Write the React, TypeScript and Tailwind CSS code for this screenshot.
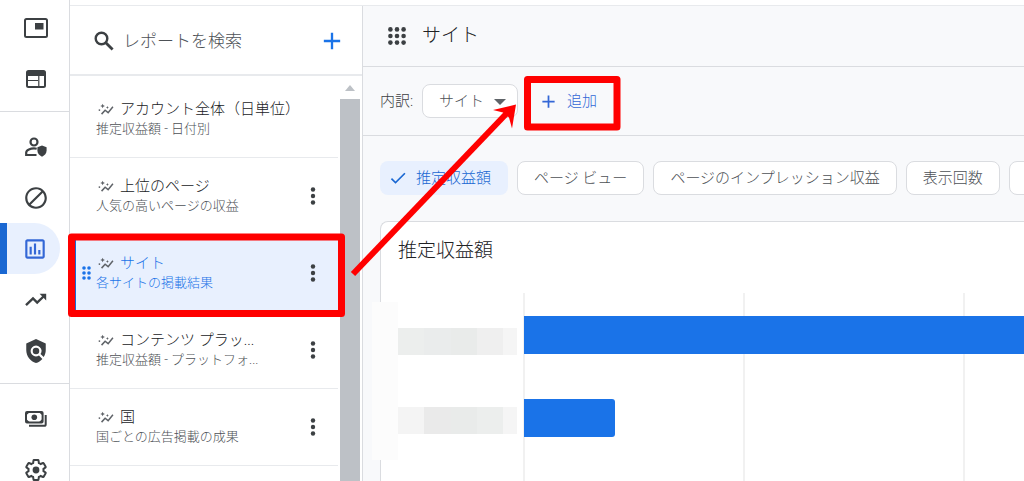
import React, { useState } from 'react';
import { MdAdd, MdBlock, MdCheck, MdOutlineAssessment, MdPolicy } from 'react-icons/md';

interface Report {
  title: string;
  subtitle: string;
  menu: boolean;
}

const reports: Report[] = [
  { title: 'アカウント全体（日単位）', subtitle: '推定収益額 - 日付別', menu: false },
  { title: '上位のページ', subtitle: '人気の高いページの収益', menu: true },
  { title: 'サイト', subtitle: '各サイトの掲載結果', menu: true },
  { title: 'コンテンツ プラッ...', subtitle: '推定収益額 - プラットフォ...', menu: true },
  { title: '国', subtitle: '国ごとの広告掲載の成果', menu: true },
];

const metrics = ['ページ ビュー', 'ページのインプレッション収益', '表示回数'];

function OverviewIcon() {
  return (
    <svg width="24" height="20" viewBox="0 0 24 20" fill="none">
      <rect x="1" y="1" width="22" height="18" rx="1.5" stroke="currentColor" strokeWidth="2" />
      <rect x="11" y="5" width="8.5" height="6.5" fill="currentColor" />
    </svg>
  );
}

function AdsIcon() {
  return (
    <svg width="20" height="18" viewBox="0 0 20 18" fill="none" stroke="currentColor">
      <rect x="1" y="1" width="18" height="16" rx="1.5" strokeWidth="2" />
      <path d="M1 4h18" strokeWidth="4" />
      <path d="M2 10.5h10M12.8 5v11" strokeWidth="1.2" />
    </svg>
  );
}

function PrivacyIcon() {
  return (
    <svg width="22" height="20" viewBox="0 0 22 20" fill="none">
      <circle cx="9" cy="5" r="3.5" stroke="currentColor" strokeWidth="2.2" />
      <path
        d="M11.5 18H1.2v-2.4c0-2.9 4.6-4.2 7.8-4.2 1 0 1.8.1 2.7.3"
        stroke="currentColor"
        strokeWidth="2.2"
      />
      <path d="M17 8.4l4.6 1.9v3.3c0 2.8-1.9 5.1-4.6 6.1-2.7-1-4.6-3.3-4.6-6.1v-3.3z" fill="currentColor" />
    </svg>
  );
}

function TrendIcon() {
  return (
    <svg width="22" height="14" viewBox="0 0 22 14" fill="none">
      <path d="M1 12.2l7-6.8 4.2 4.2L19 3" stroke="currentColor" strokeWidth="2.4" />
      <path d="M14.6.8h6.6v6.6z" fill="currentColor" />
    </svg>
  );
}

function PaymentsIcon() {
  return (
    <svg width="22" height="16" viewBox="0 0 22 16" fill="none">
      <path d="M20.7 4v9.2c0 .9-.6 1.6-1.5 1.6H4" stroke="currentColor" strokeWidth="2" />
      <rect x="1" y="1" width="16.6" height="10.4" rx="1" stroke="currentColor" strokeWidth="2" />
      <path d="M1 1h4L1 4.6zM17.6 1h-4l4 3.6zM1 11.4h4L1 7.8zM17.6 11.4h-4l4-3.6z" fill="currentColor" />
      <circle cx="9.3" cy="6.2" r="2.8" fill="currentColor" />
    </svg>
  );
}

function SettingsIcon() {
  return (
    <svg width="24" height="24" viewBox="0 0 24 24" fill="none">
      <path
        d="M19.43 12.98c.04-.32.07-.64.07-.98s-.03-.66-.07-.98l2.11-1.65c.19-.15.24-.42.12-.64l-2-3.46c-.12-.22-.39-.3-.61-.22l-2.49 1c-.52-.4-1.08-.73-1.69-.98l-.38-2.65C14.46 2.18 14.25 2 14 2h-4c-.25 0-.46.18-.49.42l-.38 2.65c-.61.25-1.17.59-1.69.98l-2.49-1c-.23-.09-.49 0-.61.22l-2 3.46c-.13.22-.07.49.12.64l2.11 1.65c-.04.32-.07.65-.07.98s.03.66.07.98l-2.11 1.65c-.19.15-.24.42-.12.64l2 3.46c.12.22.39.3.61.22l2.49-1c.52.4 1.08.73 1.69.98l.38 2.65c.03.24.24.42.49.42h4c.25 0 .46-.18.49-.42l.38-2.65c.61-.25 1.17-.59 1.69-.98l2.49 1c.23.09.49 0 .61-.22l2-3.46c.12-.22.07-.49-.12-.64z"
        stroke="currentColor"
        strokeWidth="2"
      />
      <circle cx="12" cy="12" r="3.4" fill="currentColor" />
    </svg>
  );
}

function SearchIcon() {
  return (
    <svg width="20" height="20" viewBox="0 0 20 20" fill="none" stroke="#3c4043" className="shrink-0">
      <circle cx="7.5" cy="7.5" r="5.8" strokeWidth="2.4" />
      <path d="M11.8 11.8l6.8 6.8" strokeWidth="2.8" />
    </svg>
  );
}

function InsightIcon() {
  return (
    <svg width="16" height="13" viewBox="0 0 18 14" fill="none" className="shrink-0">
      <path d="M4 12.2l4-4.4 3.4 2.7L16.8 4" stroke="#5f6368" strokeWidth="1.7" />
      <path d="M5.2.4l.8 1.8 1.8.8-1.8.8-.8 1.8-.8-1.8L2.6 3l1.8-.8z" fill="#5f6368" />
      <path d="M10.6 3.2l.5 1.1 1.1.5-1.1.5-.5 1.1-.5-1.1-1.1-.5 1.1-.5z" fill="#5f6368" />
      <circle cx="1.6" cy="7.6" r="1" fill="#5f6368" />
    </svg>
  );
}

function DragDots() {
  return (
    <svg width="9" height="14" viewBox="0 0 9 14" fill="#1a73e8">
      {[2, 7, 12].map((y) => (
        <React.Fragment key={y}>
          <circle cx="2" cy={y} r="1.8" />
          <circle cx="7" cy={y} r="1.8" />
        </React.Fragment>
      ))}
    </svg>
  );
}

function MoreIcon() {
  return (
    <svg width="6" height="18" viewBox="0 0 6 18" fill="#3c4043">
      <circle cx="3" cy="2.5" r="2.2" />
      <circle cx="3" cy="9" r="2.2" />
      <circle cx="3" cy="15.5" r="2.2" />
    </svg>
  );
}

function GridDots() {
  return (
    <svg width="18" height="18" viewBox="0 0 18 18" fill="#3c4043">
      {[2.4, 9, 15.6].map((y) =>
        [2.4, 9, 15.6].map((x) => <circle key={`${x}-${y}`} cx={x} cy={y} r="2.3" />)
      )}
    </svg>
  );
}

function RailItem({ label, active = false, children }: {
  label: string;
  active?: boolean;
  children: React.ReactNode;
}) {
  return (
    <a
      href="#"
      aria-label={label}
      className={`flex h-[51px] shrink-0 items-center justify-center ${
        active
          ? 'mr-[9px] rounded-r-full border-l-[7px] border-[#1967d2] bg-[#e8f0fe] pl-[3px] text-[#3367d6]'
          : 'pl-0.5 text-[#3c4043]'
      }`}
    >
      {children}
    </a>
  );
}

function Rail() {
  return (
    <nav className="flex w-[70px] shrink-0 flex-col border-r border-[#dadce0] bg-white pt-0.5">
      <RailItem label="概要"><OverviewIcon /></RailItem>
      <RailItem label="広告"><AdsIcon /></RailItem>
      <hr className="mt-[7px] mb-[9px] border-[#dadce0]" />
      <RailItem label="プライバシー"><PrivacyIcon /></RailItem>
      <RailItem label="ブロック"><MdBlock size={26} /></RailItem>
      <RailItem label="レポート" active><MdOutlineAssessment size={26} /></RailItem>
      <RailItem label="最適化"><TrendIcon /></RailItem>
      <RailItem label="ポリシー"><MdPolicy size={26} /></RailItem>
      <hr className="mt-[7px] mb-[9px] border-[#dadce0]" />
      <RailItem label="お支払い"><PaymentsIcon /></RailItem>
      <RailItem label="設定"><SettingsIcon /></RailItem>
    </nav>
  );
}

function ReportRow({ report, active, onSelect }: {
  report: Report;
  active: boolean;
  onSelect: () => void;
}) {
  return (
    <li
      className={`flex h-[77px] border-b border-[#e8eaed] ${
        active ? 'border-l-[6px] border-l-[#1967d2] bg-[#e8f0fe]' : 'pl-1.5'
      }`}
    >
      <span className="flex w-5 items-center justify-center">{active && <DragDots />}</span>
      <button
        onClick={onSelect}
        className="flex min-w-0 flex-1 flex-col items-start pt-[18px] text-left whitespace-nowrap"
      >
        <span className="flex h-5 items-center">
          <span className="w-6 pl-0.5"><InsightIcon /></span>
          <span className={`text-[15px] leading-5 ${active ? 'text-[#1a73e8]' : 'text-[#202124]'}`}>
            {report.title}
          </span>
        </span>
        <span className={`text-[13px] leading-5 ${active ? 'text-[#1a73e8]' : 'text-[#4d5156]'}`}>
          {report.subtitle}
        </span>
      </button>
      {report.menu && (
        <button aria-label="メニュー" className="flex w-[50px] items-center justify-center">
          <MoreIcon />
        </button>
      )}
    </li>
  );
}

function ReportList() {
  const [selected, setSelected] = useState(2);

  return (
    <aside className="flex w-[293px] shrink-0 flex-col border-r border-[#dadce0] bg-white">
      <div className="flex h-[70px] shrink-0 items-center border-b-2 border-[#e8eaed] pt-0.5 pr-4 pl-6">
        <SearchIcon />
        <input
          type="text"
          aria-label="レポートを検索"
          placeholder="レポートを検索"
          className="ml-[9px] min-w-0 flex-1 pt-0.5 text-[17px] outline-none placeholder:text-[#4d5156]"
        />
        <button aria-label="レポートを作成" className="text-[#1a73e8]">
          <MdAdd size={28} />
        </button>
      </div>
      <div className="flex min-h-0 flex-1">
        <ul className="min-w-0 flex-1 overflow-hidden pt-[5px]">
          {reports.map((report, i) => (
            <ReportRow
              key={report.title}
              report={report}
              active={i === selected}
              onSelect={() => setSelected(i)}
            />
          ))}
        </ul>
        {/* Scrollbar */}
        <div className="mr-0.5 ml-0.5 flex w-5 flex-col">
          <div className="flex h-[23px] items-center justify-center">
            <svg width="10" height="6" viewBox="0 0 10 6" fill="#bdc1c6"><path d="M0 6l5-6 5 6z" /></svg>
          </div>
          <div className="flex-1 bg-[#bdc1c6]" />
        </div>
      </div>
    </aside>
  );
}

function Chart() {
  // Site names are masked with pale blocks
  return (
    <svg width="100%" height="100%" className="block overflow-visible" role="img" aria-label="サイト別の推定収益額">
      <rect x="-9" y="9" width="26" height="158" fill="#fcfcfc" />
      <g shapeRendering="crispEdges">
        <rect x="17" y="35" width="26" height="27" fill="#eceeed" />
        <rect x="43" y="35" width="27" height="27" fill="#eaecec" />
        <rect x="70" y="35" width="26" height="27" fill="#e9ebea" />
        <rect x="96" y="35" width="26" height="27" fill="#efefef" />
        <rect x="122" y="35" width="14" height="27" fill="#f5f5f5" />
        <rect x="17" y="114" width="26" height="27" fill="#f4f4f4" />
        <rect x="43" y="114" width="27" height="27" fill="#eaeaea" />
        <rect x="70" y="114" width="26" height="27" fill="#e9ebea" />
        <rect x="96" y="114" width="26" height="27" fill="#eceeed" />
        <rect x="122" y="114" width="14" height="27" fill="#f5f5f5" />
        <rect x="142" y="0" width="2" height="100%" fill="#f1f1f1" />
        <rect x="362" y="0" width="2" height="100%" fill="#f1f1f1" />
        <rect x="582" y="0" width="2" height="100%" fill="#f1f1f1" />
      </g>
      <rect x="143" y="23" width="100%" height="38" fill="#1a73e8" />
      <path d="M143 106h88a3 3 0 0 1 3 3v32a3 3 0 0 1-3 3h-88z" fill="#1a73e8" />
    </svg>
  );
}

function Content() {
  return (
    <main className="flex min-w-0 flex-1 flex-col overflow-hidden bg-[#f8f9fb]">
      <header className="flex h-[61px] shrink-0 items-center gap-4 border-b border-[#dadce0] pl-[25px]">
        <GridDots />
        <h1 className="text-[19px] leading-7 text-[#202124]">サイト</h1>
      </header>

      <div className="flex h-[69px] shrink-0 items-center border-b border-[#dadce0] pl-[17px] text-[15px]">
        <label htmlFor="breakdown" className="w-[42px] text-[#3c4043]">内訳:</label>
        <div className="relative">
          <select
            id="breakdown"
            className="h-[34px] w-24 appearance-none rounded-lg border border-[#dadce0] bg-white pl-4 text-[#4d5156]"
          >
            <option>サイト</option>
          </select>
          <svg
            width="12" height="6" viewBox="0 0 12 6" fill="#5f6368"
            className="pointer-events-none absolute top-[15px] right-3"
          >
            <path d="M0 0h12L6 6z" />
          </svg>
        </div>
        <button className="ml-5 flex items-center gap-2 text-[#3367d6]">
          <MdAdd size={21} />
          追加
        </button>
      </div>

      {/* Metric chips */}
      <div className="flex shrink-0 gap-[9px] pt-[25px] pl-[17px] text-[15px] whitespace-nowrap">
        <button className="flex h-[34px] shrink-0 items-center gap-2 rounded-lg bg-[#e8f0fe] pr-[17px] pl-2 text-[#1967d2]">
          <MdCheck size={20} />
          推定収益額
        </button>
        {metrics.map((metric) => (
          <button
            key={metric}
            className="h-[34px] shrink-0 rounded-lg border border-[#dadce0] bg-white px-4 text-[#4d5156]"
          >
            {metric}
          </button>
        ))}
        <button
          aria-label="その他の指標"
          className="h-[34px] w-24 shrink-0 rounded-lg border border-[#dadce0] bg-white"
        />
      </div>

      <section className="mt-[26px] ml-[17px] flex flex-1 flex-col rounded-tl-lg border-t border-l border-[#dadce0] bg-white">
        <h2 className="pt-[15px] pl-[17px] text-[19px] leading-7 text-[#202124]">推定収益額</h2>
        <div className="mt-7 min-h-[188px] flex-1">
          <Chart />
        </div>
      </section>
    </main>
  );
}

function Annotations() {
  return (
    <svg className="pointer-events-none absolute inset-0 h-full w-full">
      <g fill="none" stroke="#ff0000" strokeWidth="7" strokeLinejoin="round">
        <rect x="71.5" y="237" width="270" height="76.5" />
        <rect x="527.5" y="79.5" width="89.5" height="47.5" />
        <path d="M353 274L507 113" strokeWidth="6" />
      </g>
      <path d="M516 104.5L493 110l10 2.5 6 5 3 11z" fill="#ff0000" />
    </svg>
  );
}

export default function App() {
  return (
    <div className="relative flex h-screen overflow-hidden bg-white font-['Roboto','Noto_Sans_CJK_JP',sans-serif] font-light">
      <Rail />
      <div className="mt-[5px] flex min-w-0 flex-1 border-t border-[#e8eaed]">
        <ReportList />
        <Content />
      </div>
      <Annotations />
    </div>
  );
}
